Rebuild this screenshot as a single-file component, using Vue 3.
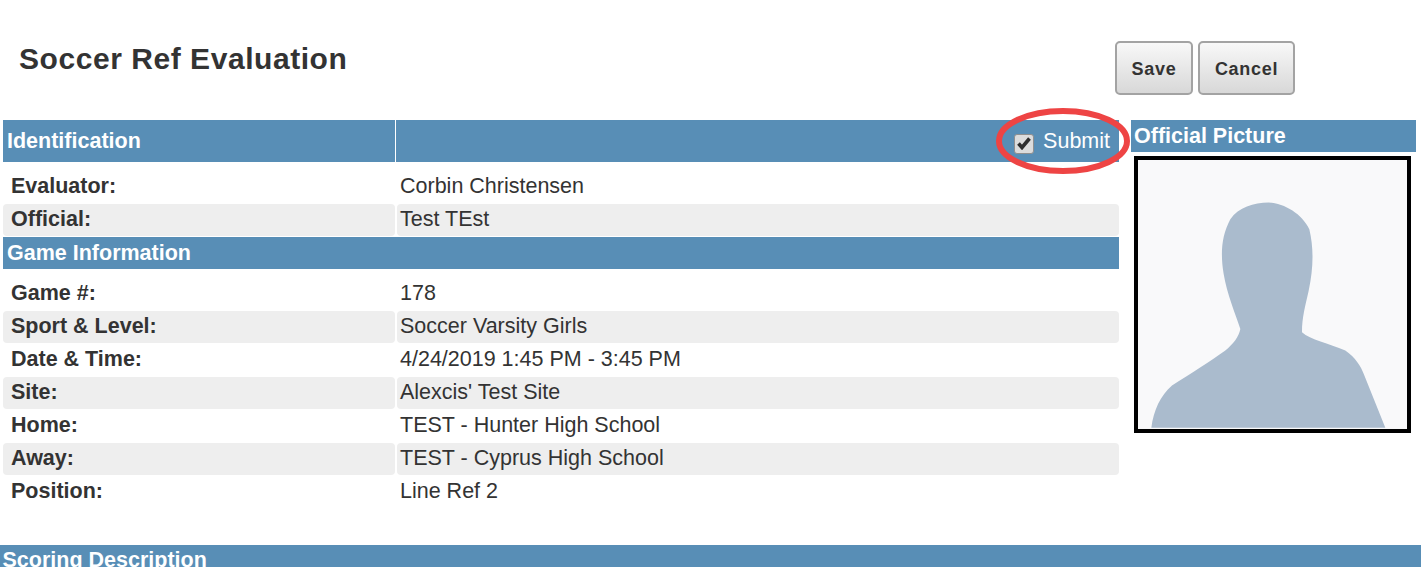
<template>
  <div class="page">
    <div class="top">
      <h1>Soccer Ref Evaluation</h1>
      <div class="actions">
        <button class="btn save">Save</button>
        <button class="btn cancel">Cancel</button>
      </div>
    </div>

    <div class="main">
      <div class="details">
        <div class="head id-head">
          <div class="head-title">Identification</div>
          <div class="head-submit">
            <span class="check">
              <svg width="14" height="13" viewBox="0 0 14 13"><path d="M1.5 6.5 L5 10.5 L12.5 1.5" fill="none" stroke="#2e2e2e" stroke-width="3.6" /></svg>
            </span>
            <span>Submit</span>
          </div>
        </div>
        <div class="rows first">
          <div v-for="r in idRows" :key="r.label" class="row">
            <div class="label">{{ r.label }}</div>
            <div class="value">{{ r.value }}</div>
          </div>
        </div>
        <div class="head thin">Game Information</div>
        <div class="rows second">
          <div v-for="r in gameRows" :key="r.label" class="row">
            <div class="label">{{ r.label }}</div>
            <div class="value">{{ r.value }}</div>
          </div>
        </div>
      </div>

      <div class="side">
        <div class="head thin side-head">Official Picture</div>
        <div class="photo">
          <svg viewBox="38 27 807 809" preserveAspectRatio="none">
            <path class="person" fill="#aabbcd" d="M78 832 C85 780 105 735 140 705 C200 668 255 632 300 600 C325 578 340 560 345 535 C330 490 305 430 295 370 C285 310 288 255 315 205 C340 170 385 155 430 155 C480 158 530 190 552 235 C565 290 565 350 550 420 C540 465 530 500 530 545 C555 568 610 578 660 600 C690 620 708 650 715 670 L780 832 Z" />
          </svg>
        </div>
      </div>
    </div>

    <div class="scoring">Scoring Description</div>

    <svg class="ring" width="136" height="70" viewBox="0 0 136 70">
      <ellipse cx="68" cy="35" rx="64" ry="30" fill="none" stroke="#ee4444" stroke-width="6" />
    </svg>
  </div>
</template>

<script setup>
const idRows = [
  { label: 'Evaluator:', value: 'Corbin Christensen' },
  { label: 'Official:', value: 'Test TEst' }
]

const gameRows = [
  { label: 'Game #:', value: '178' },
  { label: 'Sport & Level:', value: 'Soccer Varsity Girls' },
  { label: 'Date & Time:', value: '4/24/2019 1:45 PM - 3:45 PM' },
  { label: 'Site:', value: "Alexcis' Test Site" },
  { label: 'Home:', value: 'TEST - Hunter High School' },
  { label: 'Away:', value: 'TEST - Cyprus High School' },
  { label: 'Position:', value: 'Line Ref 2' }
]
</script>

<style>
html, body { background: #fff; overflow: hidden; }
</style>

<style scoped>
.page {
  position: relative;
  width: 1421px;
  height: 567px;
  overflow: hidden;
  font-family: "Liberation Sans", Arial, sans-serif;
  color: #333;
}
.top {
  display: flex;
  justify-content: space-between;
  height: 120px;
  padding: 41px 126px 0 19px;
  box-sizing: border-box;
}
h1 {
  margin: 0;
  font-size: 30px;
  line-height: 35px;
  font-weight: bold;
  letter-spacing: 0.55px;
}
.actions { display: flex; gap: 5px; height: 54px; }
.btn {
  height: 54px;
  border: 2px solid #a3a3a3;
  border-radius: 5px;
  background: linear-gradient(#f8f8f8, #d8d8d8);
  color: #333;
  font: bold 18px "Liberation Sans", Arial, sans-serif;
  letter-spacing: 0.7px;
  padding: 2px 0 0;
}
.save { width: 78px; }
.cancel { width: 97px; }

.main { display: flex; padding-left: 3px; height: 425px; }
.details { width: 1116px; }
.side { width: 285px; margin-left: 12px; }

.head {
  background: #588eb6;
  color: #fff;
  font-weight: bold;
  font-size: 21.5px;
}
.thin {
  height: 32px;
  line-height: 32px;
  padding-left: 4px;
}
.side-head { padding-left: 3px; }
.id-head {
  display: grid;
  grid-template-columns: 393px 1fr;
  height: 42px;
  line-height: 42px;
}
.head-title { padding-left: 4px; border-right: 1px solid #fff; }
.head-submit {
  display: flex;
  justify-content: flex-end;
  align-items: center;
  gap: 9px;
  padding-right: 9px;
  font-weight: normal;
}
.check {
  width: 20px;
  height: 20px;
  margin-top: 5px;
  box-sizing: border-box;
  border: 1px solid #8f8f8f;
  border-radius: 3px;
  background: #dcdcdc;
  display: flex;
  align-items: center;
  justify-content: center;
}

.rows { display: flex; flex-direction: column; gap: 1px; font-size: 21.5px; }
.first { padding-top: 9px; padding-bottom: 1px; }
.second { padding-top: 9px; }
.row {
  display: grid;
  grid-template-columns: 392px 1fr;
  gap: 2px;
  height: 32px;
  line-height: 30px;
}
.row:nth-child(even) .label,
.row:nth-child(even) .value { background: #eee; border-radius: 4px; }
.label { font-weight: bold; padding-left: 8px; }
.value { padding-left: 3px; }

.photo {
  margin: 4px 0 0 3px;
  width: 277px;
  height: 277px;
  box-sizing: border-box;
  border: 4px solid #000;
  background: #f9f9fa;
}
.photo svg { display: block; width: 100%; height: 100%; }
.person { filter: blur(1.5px); }

.scoring {
  background: #588eb6;
  color: #fff;
  font-weight: bold;
  font-size: 21.5px;
  height: 22px;
  line-height: 30px;
  padding-left: 2.5px;
}
.ring {
  position: absolute;
  left: 995px;
  top: 106px;
}
</style>
